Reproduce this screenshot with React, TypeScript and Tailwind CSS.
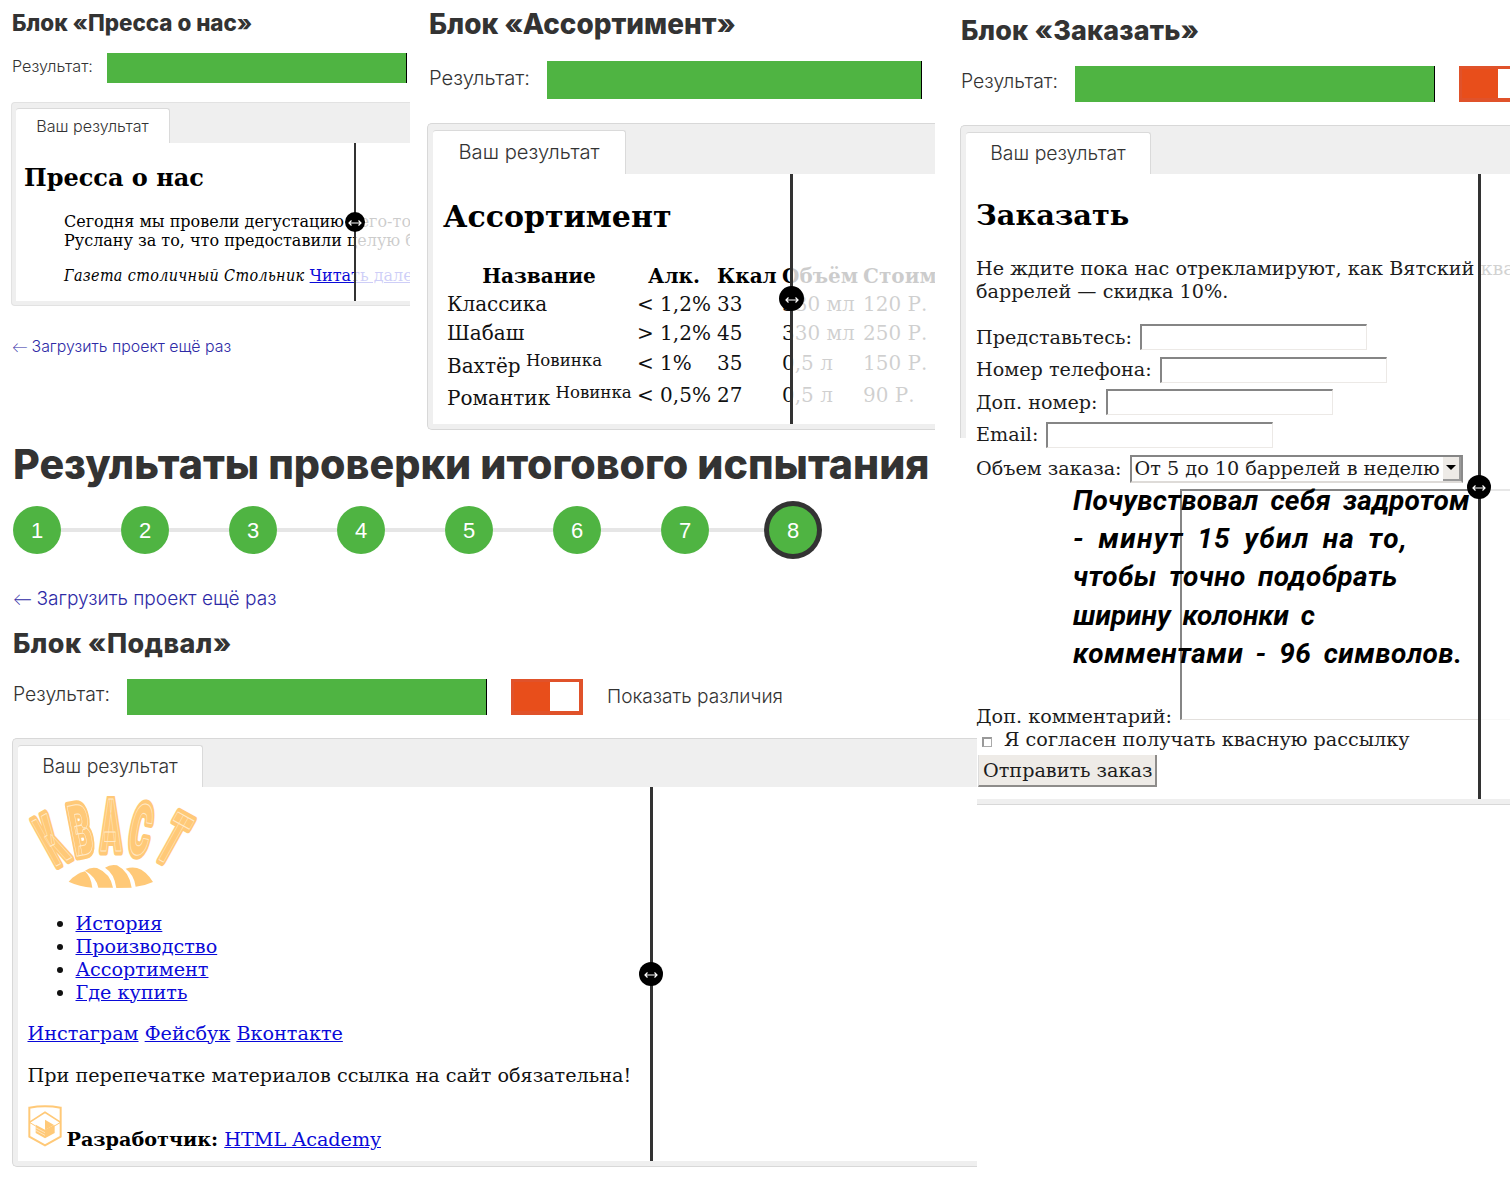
import type { ReactNode } from "react";

const sans = "font-['Inter',sans-serif]";
const serif = "font-['DejaVu_Serif',serif]";

function Title({ className, children }: { className: string; children: ReactNode }) {
  return <h2 className={`${sans} font-extrabold whitespace-nowrap text-[#333] ${className}`}>{children}</h2>;
}

function Label({ className, children }: { className: string; children: ReactNode }) {
  return <span className={`${sans} shrink-0 font-light whitespace-nowrap text-[#333] ${className}`}>{children}</span>;
}

function Bar({ className }: { className: string }) {
  return <div className={`h-full shrink-0 border-r border-black bg-[#4fb442] ${className}`} />;
}

function Toggle() {
  return (
    <div className="ml-6 flex h-9 w-[72px] shrink-0 justify-end border-[3px] border-r-4 border-b-4 border-[#e0522a] bg-[#e84e1b]">
      <div className="size-[29px] bg-white" />
    </div>
  );
}

function Tab({ className, children }: { className: string; children: ReactNode }) {
  return (
    <div className={`${sans} rounded-t-[3px] border-t border-r border-[#dadada] bg-white text-center font-light whitespace-nowrap text-[#333] ${className}`}>
      {children}
    </div>
  );
}

/* Comparison handle: fades everything on its right side */
function Divider({ className, line, knob }: { className: string; line: string; knob: string }) {
  return (
    <div className={`absolute right-0 bg-white/80 ${className}`}>
      <div className={`h-full bg-[#333] ${line}`} />
      <div className={`absolute flex items-center justify-center rounded-full bg-black ${knob}`}>
        <svg className="mt-[2px] w-[14px]" viewBox="0 0 14 8" fill="none" stroke="white" strokeWidth="1.2">
          <path d="M1 4H13M3.5 1.5L1 4L3.5 6.5M10.5 1.5L13 4L10.5 6.5" />
        </svg>
      </div>
    </div>
  );
}

function Link({ children }: { children: ReactNode }) {
  return <a className="text-[#0a0ad8] underline">{children}</a>;
}

function Press() {
  return (
    <section className="w-[427px] shrink-0">
      <Title className="pl-3 text-[22.4px] leading-[46px]">Блок «Пресса о нас»</Title>
      <div className="mt-[7px] flex h-[30px] pl-3">
        <Label className="w-[95px] text-[16.2px] leading-[27px]">Результат:</Label>
        <Bar className="w-[300px]" />
      </div>
      <div className="mt-[19px] ml-[11px] h-[204px] w-[399px] rounded-l-[4px] border border-r-0 border-[#e2e2e2] bg-[#efefef] pt-[5px] pl-1">
        <Tab className="h-[35px] w-[154px] text-[16.1px] leading-[35px]">Ваш результат</Tab>
        <div className={`${serif} relative h-[158px] overflow-hidden bg-white pt-5 pl-2 text-base leading-[19px] whitespace-nowrap text-black`}>
          <h3 className="text-2xl leading-[29px] font-bold">Пресса о нас</h3>
          <p className="mt-5 ml-10">
            Сегодня мы провели дегустацию чего-то
            <br />
            Руслану за то, что предоставили целую бочку
          </p>
          <p className="mt-4 ml-10">
            <i className="font-['DejaVu_Serif_Condensed','DejaVu_Serif',serif] tracking-[0.35px]">Газета столичный Стольник</i> <Link>Читать далее</Link>
          </p>
          <Divider className="inset-y-0 left-[338px]" line="w-[2px]" knob="top-[69px] left-[-9px] size-5" />
        </div>
      </div>
      <a className={`${sans} mt-[30px] flex pl-3 text-[15.9px] leading-[22px] font-light text-[#2e2aa6]`}>
        <span className="w-[19.5px] font-['Lato',sans-serif]">←</span>Загрузить проект ещё раз
      </a>
    </section>
  );
}

const rows = [
  { name: "Классика", fresh: false, cells: ["< 1,2%", "33", "330 мл", "120 Р."], h: "h-[29px]", pad: "" },
  { name: "Шабаш", fresh: false, cells: ["> 1,2%", "45", "330 мл", "250 Р."], h: "h-[29px]", pad: "" },
  { name: "Вахтёр", fresh: true, cells: ["< 1%", "35", "0,5 л", "150 Р."], h: "h-[30px]", pad: "pt-[6px]" },
  { name: "Романтик", fresh: true, cells: ["< 0,5%", "27", "0,5 л", "90 Р."], h: "h-[35px]", pad: "pt-[5px]" },
];

function Assortment() {
  return (
    <section className="w-[508px] shrink-0">
      <Title className="pl-0.5 text-[27.9px] leading-[48px]">Блок «Ассортимент»</Title>
      <div className="mt-[13px] flex h-[38px] pl-0.5">
        <Label className="w-[118px] text-[20.2px] leading-[34px]">Результат:</Label>
        <Bar className="w-[375px]" />
      </div>
      <div className="mt-6 h-[307px] rounded-l-[5px] border border-r-0 border-[#d8d8d8] bg-[#efefef] pt-[6px] pl-[5px]">
        <Tab className="h-[44px] w-[193px] text-[20.2px] leading-[42px]">Ваш результат</Tab>
        <div className={`${serif} relative h-[250px] overflow-hidden bg-white pt-[26px] pl-[10px] text-xl whitespace-nowrap text-[#111]`}>
          <h3 className="text-[30px] leading-[34px] font-bold text-black">Ассортимент</h3>
          <div className="mt-[27px] ml-1 leading-[23px]">
            <div className="grid h-[29px] grid-cols-[190px_80px_65px_81px_120px] items-center pt-px font-bold text-black">
              <span className="pr-[6px] text-center">Название</span>
              <span className="pr-[6px] text-center">Алк.</span>
              <span>Ккал</span>
              <span>Объём</span>
              <span>Стоимость</span>
            </div>
            {rows.map((r) => (
              <div key={r.name} className={`grid grid-cols-[190px_80px_65px_81px_120px] items-center ${r.h}`}>
                <span className={r.pad}>
                  {r.name}
                  {r.fresh && <span className="relative top-[-7px] text-[16.6px] leading-none"> Новинка</span>}
                </span>
                {r.cells.map((c, i) => (
                  <span key={i}>{c}</span>
                ))}
              </div>
            ))}
          </div>
          <Divider className="inset-y-0 left-[357px]" line="w-[3px]" knob="top-[112px] left-[-11px] size-[25px]" />
        </div>
      </div>
    </section>
  );
}

function Field({ label }: { label: string }) {
  return (
    <label className="flex h-[32.5px] items-center gap-2">
      {label}
      <span className="h-[26px] w-[227px] border-t-[2px] border-r border-b border-l-[2px] border-t-[#858585] border-r-[#ece9e6] border-b-[#ece9e6] border-l-[#858585] bg-white" />
    </label>
  );
}

function Order() {
  return (
    <section className="w-[550px] shrink-0">
      <Title className="pl-px text-[26.9px] leading-[60px] tracking-[0.17px]">Блок «Заказать»</Title>
      <div className="mt-[6px] flex h-9 pl-px">
        <Label className="w-[114px] text-[19.4px] leading-[31px]">Результат:</Label>
        <Bar className="w-[360px]" />
        <Toggle />
      </div>
      <div className="mt-[23px] h-[49px] rounded-tl-[5px] border-t border-l border-[#d8d8d8] bg-[#efefef] pt-[6px] pl-[5px]">
        <Tab className="h-[42px] w-[185px] text-[19.4px] leading-[41px]">Ваш результат</Tab>
      </div>
      <div className={`${serif} relative h-[631px] text-[19.2px] leading-[23px] whitespace-nowrap text-[#1c1c1c]`}>
        <div className="absolute top-0 left-0 h-[264px] w-[6px] border-l border-[#d8d8d8] bg-[#efefef]" />
        <div className="flex h-[625px] flex-col overflow-hidden pl-4">
          <h3 className="mt-[25px] text-[28.8px] leading-[33px] font-bold text-black">Заказать</h3>
          <p className="mt-[25px]">
            Не ждите пока нас отрекламируют, как Вятский квас
            <br />
            баррелей — скидка 10%.
          </p>
          <div className="mt-[18px]">
            <Field label="Представьтесь:" />
            <Field label="Номер телефона:" />
            <Field label="Доп. номер:" />
            <Field label="Email:" />
            <label className="flex h-[35px] items-center gap-2">
              Объем заказа:
              <span className="flex h-[28px] w-[333px] justify-between border-[2px] border-t-[#858585] border-r-[#8b8b8b] border-b-[#dedbd8] border-l-[#858585] bg-white pl-[3px] leading-[24px]">
                От 5 до 10 баррелей в неделю
                <span className="flex w-[18px] items-center justify-center border-r-2 border-b-2 border-[#9a9a9a] bg-[#eeebe7]">
                  <span className="border-x-[5px] border-t-[5px] border-x-transparent border-t-black" />
                </span>
              </span>
            </label>
          </div>
          <div className="mt-[2.6px] flex h-[239px] items-end">
            <span className="w-[204px] shrink-0">Доп. комментарий:</span>
            <span className="mb-2 h-[231px] w-[380px] shrink-0 border-t-2 border-b border-l-2 border-t-[#858585] border-b-[#e3e0dd] border-l-[#858585]" />
          </div>
          <label className="flex h-[23px] items-center pl-[6px]">
            <span className="mt-[6px] mr-3 size-[10px] border border-[#aaa] border-t-2 border-l-2 border-t-[#999] border-l-[#999] bg-white" />
            Я согласен получать квасную рассылку
          </label>
          <button className="mt-[4px] ml-[2px] h-8 w-[179px] border-r-2 border-b-2 border-l border-[#8e8c8a] border-l-[#ddd] bg-[#eeebe7] pt-[2px] text-left">
            <span className="pl-1">Отправить заказ</span>
          </button>
        </div>
        <div className="ml-[17px] h-[6px] border-b border-[#d8d8d8] bg-[#efefef]" />
        <Divider className="top-0 left-[518px] h-[625px]" line="w-[3px]" knob="top-[301px] left-[-11px] size-6" />
        <div className="absolute top-[308px] left-[113px] font-['Roboto',sans-serif] text-[28px] leading-[38.2px] font-bold text-black italic [word-spacing:5px]">
          <div className="tracking-[0.23px]">Почувствовал себя задротом</div>
          <div className="tracking-[1.35px]">- минут 15 убил на то,</div>
          <div className="tracking-[0.4px]">чтобы точно подобрать</div>
          <div>ширину колонки с</div>
          <div className="tracking-[0.48px]">комментами - 96 символов.</div>
        </div>
      </div>
    </section>
  );
}

const letters = [
  { c: "К", x: 120, y: 180, r: -29, s: 0.41 },
  { c: "В", x: 209, y: 149, r: -11, s: 0.46 },
  { c: "А", x: 300, y: 138, r: 0, s: 0.42 },
  { c: "С", x: 390, y: 149, r: 11, s: 0.44 },
  { c: "Т", x: 488, y: 176, r: 29, s: 0.44 },
];

function KvastLogo() {
  return (
    <svg className="h-[92px] w-[170px]" viewBox="51 48 510 276">
      {letters.map((l) => (
        <g key={l.c} transform={`translate(${l.x} ${l.y}) rotate(${l.r}) scale(${l.s} 1)`} fontFamily="Roboto" fontWeight="900" fontSize="214" textAnchor="middle" fill="#ffc978" strokeLinejoin="round">
          <text y="76" stroke="#ffc978" strokeWidth="27">{l.c}</text>
          <text y="76" stroke="#fff3df" strokeWidth="3" strokeOpacity="0.8">{l.c}</text>
        </g>
      ))}
      <g fill="#ffc978">
        <path d="M173 305Q198 278 222 274Q240 290 244 323Q205 320 173 305Z" />
        <path d="M222 272Q238 260 258 264Q298 280 306 323H262Q255 290 222 272Z" />
        <path d="M282 263Q298 252 318 256Q355 275 362 323L316 324Q310 280 282 263Z" />
        <path d="M344 266Q362 260 378 264Q405 272 426 306Q400 318 374 320Q370 285 344 266Z" />
      </g>
    </svg>
  );
}

function AcademyLogo() {
  return (
    <svg className="h-[42px] w-[34px]" viewBox="80 286 102 126" fill="none" stroke="#ffc978" strokeWidth="6">
      <path d="M84 294Q131 286 178 294V381L131 407L84 381Z" />
      <path d="M84 338L131 308L178 338" strokeWidth="5" />
      <path d="M84 338L103 349M178 338L159 349" strokeWidth="3" />
      <path d="M103 345L131 360L160 345V370L131 386L103 370Z" fill="#ffc978" stroke="none" />
      <path d="M131 330L158 346L131 361Z" fill="#ffc978" stroke="none" />
      <path d="M103 354L131 369M103 362L131 377" stroke="#fff" strokeWidth="1.5" />
    </svg>
  );
}

function Results() {
  return (
    <section className="w-[977px]">
      <h1 className={`${sans} pl-[13px] text-[41.15px] leading-[53px] font-extrabold whitespace-nowrap text-[#333]`}>Результаты проверки итогового испытания</h1>
      <div className="mt-[15px] flex h-12 items-center pl-[13px] font-['Liberation_Sans',sans-serif] text-[22px] text-white">
        {[1, 2, 3, 4, 5, 6, 7].map((n) => (
          <div key={n} className="flex items-center">
            <div className="flex size-12 items-center justify-center rounded-full bg-[#4fb442]">{n}</div>
            <div className="h-1 w-[60px] bg-[#e6e6e6]" />
          </div>
        ))}
        <div className="flex size-12 items-center justify-center rounded-full bg-[#4fb442] ring-5 ring-[#333]">8</div>
      </div>
      <a className={`${sans} mt-8 flex pl-[13px] text-[19.1px] leading-[25px] font-light text-[#2e2aa6]`}>
        <span className="w-[23.5px] font-['Lato',sans-serif]">←</span>Загрузить проект ещё раз
      </a>
      <Title className="mt-[17px] pl-[13px] text-[26.9px] leading-[31px] tracking-[0.45px]">Блок «Подвал»</Title>
      <div className="mt-5 flex h-9 pl-[13px]">
        <Label className="w-[114px] text-[19.4px] leading-[31px]">Результат:</Label>
        <Bar className="w-[360px]" />
        <Toggle />
        <Label className="ml-6 text-[19.1px] leading-[35px]">Показать различия</Label>
      </div>
      <div className="mt-[23px] ml-3 h-[429px] rounded-l-[5px] border border-r-0 border-[#d8d8d8] bg-[#efefef] pt-[6px] pl-[5px]">
        <Tab className="h-[42px] w-[185px] text-[19.4px] leading-[41px]">Ваш результат</Tab>
        <div className={`${serif} relative h-[374px] overflow-hidden bg-white pt-[9px] pl-[9.5px] text-[19.2px] leading-[23px] whitespace-nowrap text-[#111]`}>
          <KvastLogo />
          <ul className="mt-[23.5px] ml-12 list-disc">
            {["История", "Производство", "Ассортимент", "Где купить"].map((t) => (
              <li key={t}>
                <Link>{t}</Link>
              </li>
            ))}
          </ul>
          <p className="mt-[18px]">
            <Link>Инстаграм</Link> <Link>Фейсбук</Link> <Link>Вконтакте</Link>
          </p>
          <p className="mt-[19px]">При перепечатке материалов ссылка на сайт обязательна!</p>
          <div className="mt-[18.5px] flex items-end gap-[5px]">
            <AcademyLogo />
            <p className="-mb-1">
              <b className="text-black">Разработчик:</b> <Link>HTML Academy</Link>
            </p>
          </div>
          <Divider className="inset-y-0 left-[632px]" line="w-[3px]" knob="top-[175px] left-[-11px] size-6" />
        </div>
      </div>
    </section>
  );
}

export default function App() {
  return (
    <main className="flex h-[1182px] w-[1510px] overflow-hidden bg-white">
      <div className="relative z-0 w-[960px] shrink-0">
        <div className="flex h-[438px]">
          <Press />
          <Assortment />
        </div>
        <Results />
      </div>
      <Order />
    </main>
  );
}
